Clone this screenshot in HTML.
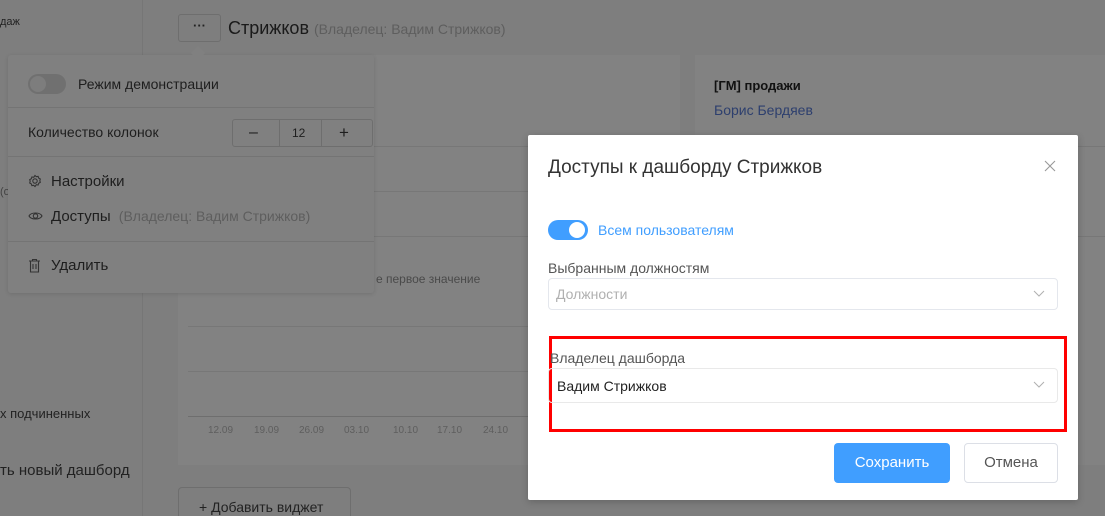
<!DOCTYPE html>
<html style="width:1105px;height:516px;overflow:hidden"><head><meta charset="utf-8"><style>
*{box-sizing:border-box;margin:0;padding:0}
body{width:1105px;height:516px;overflow:hidden;background:#7e7e7e;font-family:"Liberation Sans","Noto Sans CJK SC",sans-serif;position:relative;color:#1e1e1e}
.a{position:absolute}
.t{font-size:14px;white-space:nowrap}
</style></head><body>
<div class="a" style="left:142px;top:0;width:1px;height:516px;background:#767676"></div>
<div class="a t" style="left:0;top:16px;font-size:11px;color:#222">даж</div>
<div class="a t" style="left:0;top:186px;font-size:11px;color:#444">(о</div>
<div class="a t" style="left:0;top:406px;font-size:13px;color:#222">х подчиненных</div>
<div class="a t" style="left:0;top:462px;font-size:15px;color:#222">ть новый дашборд</div>
<!-- header -->
<div class="a" style="left:178px;top:14px;width:43px;height:28px;border:1px solid #6e6e6e;border-radius:3px;text-align:center;line-height:22px;font-size:13px;color:#222;font-weight:bold">···</div>
<div class="a t" style="left:228px;top:18px;font-size:18px;color:#1a1a1a">Стрижков <span style="font-size:14px;color:#5e5e5e">(Владелец: Вадим Стрижков)</span></div>
<!-- chart card -->
<div class="a" style="left:178px;top:55px;width:502px;height:410px;background:#828282"></div>
<div class="a" style="left:188px;top:146px;width:490px;height:1px;background:#777"></div>
<div class="a" style="left:188px;top:191px;width:490px;height:1px;background:#777"></div>
<div class="a" style="left:188px;top:236px;width:490px;height:1px;background:#777"></div>
<div class="a" style="left:188px;top:326px;width:490px;height:1px;background:#777"></div>
<div class="a" style="left:188px;top:371px;width:490px;height:1px;background:#777"></div>
<div class="a" style="left:188px;top:416px;width:490px;height:1px;background:#6e6e6e"></div>
<div class="a t" style="left:376px;top:272px;font-size:12px;color:#4a4a4a">е первое значение</div>
<div class="a" style="left:198px;top:425px;font-size:10px;color:#5e5e5e">
<span class="a" style="left:10px">12.09</span><span class="a" style="left:56px">19.09</span><span class="a" style="left:101px">26.09</span><span class="a" style="left:146px">03.10</span><span class="a" style="left:195px">10.10</span><span class="a" style="left:239px">17.10</span><span class="a" style="left:285px">24.10</span></div>
<div class="a t" style="left:1091px;top:425px;font-size:10px;color:#5e5e5e">07</div>
<!-- right card -->
<div class="a" style="left:695px;top:55px;width:410px;height:410px;background:#828282"></div>
<div class="a" style="left:695px;top:146px;width:410px;height:1px;background:#777"></div>
<div class="a" style="left:695px;top:236px;width:410px;height:1px;background:#777"></div>
<div class="a t" style="left:714px;top:78px;font-size:13px;font-weight:bold;color:#111">[ГМ] продажи</div>
<div class="a t" style="left:714px;top:102px;color:#2d3f6e">Борис Бердяев</div>
<div class="a t" style="left:178px;top:487px;width:173px;height:29px;border:1px solid #6e6e6e;border-bottom:none;border-radius:4px 4px 0 0;padding:11px 20px 0;color:#222">+ Добавить виджет</div>
<!-- popover -->
<div class="a" style="left:8px;top:55px;width:366px;height:238px;background:#808080;border-radius:3px;box-shadow:0 1px 4px rgba(0,0,0,.12)">
 <div class="a" style="left:20px;top:19px;width:38px;height:20px;border-radius:10px;background:#707070"><div class="a" style="left:2px;top:2px;width:16px;height:16px;border-radius:50%;background:#7d7d7d"></div></div>
 <div class="a t" style="left:70px;top:21px">Режим демонстрации</div>
 <div class="a" style="left:0;top:52px;width:366px;height:1px;background:#747474"></div>
 <div class="a t" style="left:20px;top:69px">Количество колонок</div>
 <div class="a" style="left:224px;top:64px;width:141px;height:28px;border:1px solid #6e6e6e;border-radius:3px">
  <div class="a" style="left:46px;top:0;width:1px;height:26px;background:#6e6e6e"></div>
  <div class="a" style="left:88px;top:0;width:1px;height:26px;background:#6e6e6e"></div>
  <div class="a t" style="left:16px;top:4px;font-size:16px">–</div>
  <div class="a t" style="left:59px;top:6px;font-size:12px">12</div>
  <div class="a t" style="left:106px;top:3px;font-size:17px">+</div>
 </div>
 <div class="a" style="left:0;top:101px;width:366px;height:1px;background:#747474"></div>
 <svg class="a" style="left:20px;top:119px" width="14" height="14" viewBox="0 0 14 14" fill="none" stroke="#333" stroke-width="1.1"><circle cx="7" cy="7" r="2.2"/><path d="M7 1.5l1.3 1.2 1.8-.3.6 1.7 1.6.9-.5 1.7.5 1.7-1.6.9-.6 1.7-1.8-.3L7 12.5l-1.3-1.2-1.8.3-.6-1.7-1.6-.9.5-1.7-.5-1.7 1.6-.9.6-1.7 1.8.3z"/></svg>
 <div class="a t" style="left:43px;top:118px;font-size:15px">Настройки</div>
 <svg class="a" style="left:20px;top:155px" width="15" height="12" viewBox="0 0 15 12" fill="none" stroke="#333" stroke-width="1.1"><path d="M1 6C3 2 12 2 14 6 12 10 3 10 1 6z"/><circle cx="7.5" cy="6" r="2.2"/></svg>
 <div class="a t" style="left:43px;top:153px;font-size:15px">Доступы <span style="color:#5e5e5e;font-size:14px;margin-left:4px">(Владелец: Вадим Стрижков)</span></div>
 <div class="a" style="left:0;top:186px;width:366px;height:1px;background:#747474"></div>
 <svg class="a" style="left:20px;top:203px" width="13" height="15" viewBox="0 0 13 15" fill="none" stroke="#333" stroke-width="1.1"><path d="M1 3h11M4.5 3V1.5h4V3M2.5 3v11h8V3M5 6v5M8 6v5"/></svg>
 <div class="a t" style="left:43px;top:202px;font-size:15px">Удалить</div>
</div>
<div class="a" style="left:193px;top:48px;width:10px;height:10px;background:#808080;transform:rotate(45deg)"></div>
<!-- modal -->
<div class="a" style="left:528px;top:135px;width:550px;height:365px;background:#fff;border-radius:2px;box-shadow:0 2px 8px rgba(0,0,0,.2)">
 <div class="a t" style="left:20px;top:22px;font-size:19px;color:#333">Доступы к дашборду Стрижков</div>
 <svg class="a" style="left:516px;top:25px" width="12" height="12" viewBox="0 0 12 12" stroke="#999" stroke-width="1.1"><path d="M1 1l10 10M11 1L1 11"/></svg>
 <div class="a" style="left:20px;top:85px;width:40px;height:20px;border-radius:10px;background:#409eff"><div class="a" style="left:21px;top:2px;width:16px;height:16px;border-radius:50%;background:#fff"></div></div>
 <div class="a t" style="left:70px;top:87px;color:#409eff">Всем пользователям</div>
 <div class="a t" style="left:20px;top:125px;color:#555">Выбранным должностям</div>
 <div class="a" style="left:20px;top:143px;width:510px;height:32px;border:1px solid #e4e7ed;border-radius:4px"><span class="a t" style="left:7px;top:7px;color:#b0b0b0">Должности</span>
  <svg class="a" style="left:484px;top:11px" width="12" height="8" viewBox="0 0 12 8" fill="none" stroke="#b0b0b0"><path d="M1 1l5 5 5-5"/></svg></div>
 <div class="a" style="left:21px;top:201px;width:518px;height:96px;border:3px solid #f00"></div>
 <div class="a t" style="left:22px;top:215px;color:#555">Владелец дашборда</div>
 <div class="a" style="left:20px;top:233px;width:510px;height:35px;border:1px solid #e9e9e9;border-radius:4px"><span class="a t" style="left:8px;top:9px;color:#222">Вадим Стрижков</span>
  <svg class="a" style="left:484px;top:12px" width="12" height="8" viewBox="0 0 12 8" fill="none" stroke="#b0b0b0"><path d="M1 1l5 5 5-5"/></svg></div>
 <div class="a t" style="left:306px;top:308px;width:116px;height:40px;background:#409eff;border-radius:4px;color:#fff;text-align:center;line-height:40px;font-size:15px">Сохранить</div>
 <div class="a t" style="left:436px;top:308px;width:94px;height:40px;border:1px solid #dcdfe6;border-radius:4px;color:#555;text-align:center;line-height:38px;font-size:15px">Отмена</div>
</div>
</body></html>
